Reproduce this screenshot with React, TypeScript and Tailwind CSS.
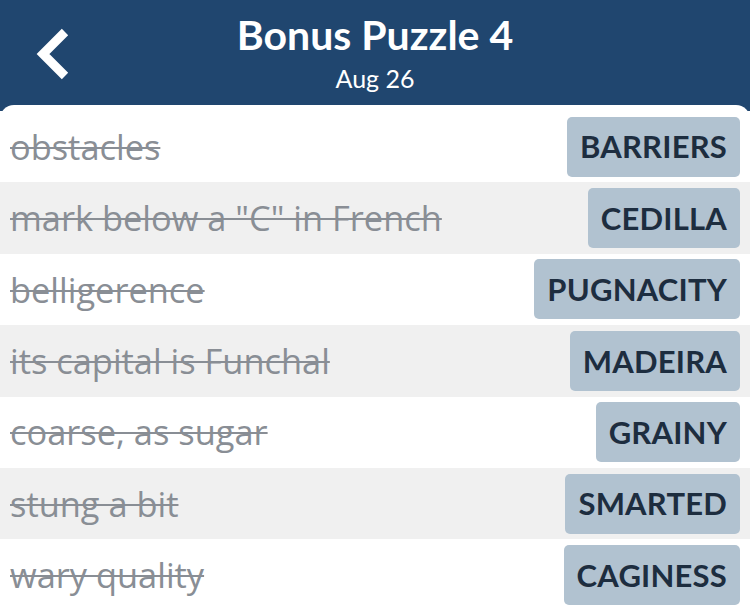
import React from "react";

const clues = [
  { clue: "obstacles", answer: "BARRIERS" },
  { clue: 'mark below a "C" in French', answer: "CEDILLA" },
  { clue: "belligerence", answer: "PUGNACITY" },
  { clue: "its capital is Funchal", answer: "MADEIRA" },
  { clue: "coarse, as sugar", answer: "GRAINY" },
  { clue: "stung a bit", answer: "SMARTED" },
  { clue: "wary quality", answer: "CAGINESS" },
];

const App = () => {
  return (
    <div className="h-[610px] w-[750px] overflow-hidden bg-[#20466f] font-['Lato','Noto_Sans',sans-serif]">
      {/* Cabeçalho */}
      <div className="relative flex h-[105px] flex-col items-center text-white">
        <svg
          className="absolute left-[34px] top-[28px]"
          width={38}
          height={52}
          viewBox="0 0 38 52"
          fill="none"
        >
          <path
            d="M31 4 L9 26 L31 48"
            stroke="white"
            strokeWidth={9}
            strokeLinecap="butt"
            strokeLinejoin="miter"
          />
        </svg>
        <div className="mt-[10px] text-[41px] font-bold leading-[50px]">
          Bonus Puzzle 4
        </div>
        <div className="mt-[3px] text-[25px] leading-[30px]">Aug 26</div>
      </div>

      {/* Lista de pistas */}
      <div className="h-[505px] rounded-t-[14px] bg-white pt-[6px]">
        {clues.map((c, i) => (
          <div
            key={c.answer}
            className={`flex h-[71.4px] items-center justify-between pl-[10px] pr-[10px] ${
              i % 2 === 1 ? "bg-[#f0f0f0]" : "bg-white"
            }`}
          >
            <span className="font-['Open_Sans',sans-serif] text-[34.4px] text-[#898e95] line-through decoration-[2px]">
              {c.clue}
            </span>
            <span className="flex h-[60px] items-center rounded-[5px] bg-[#b1c2d0] px-[13px] text-[31px] font-bold tracking-[0.2px] text-[#1d2d3f]">
              {c.answer}
            </span>
          </div>
        ))}
      </div>
    </div>
  );
};

export default App;
